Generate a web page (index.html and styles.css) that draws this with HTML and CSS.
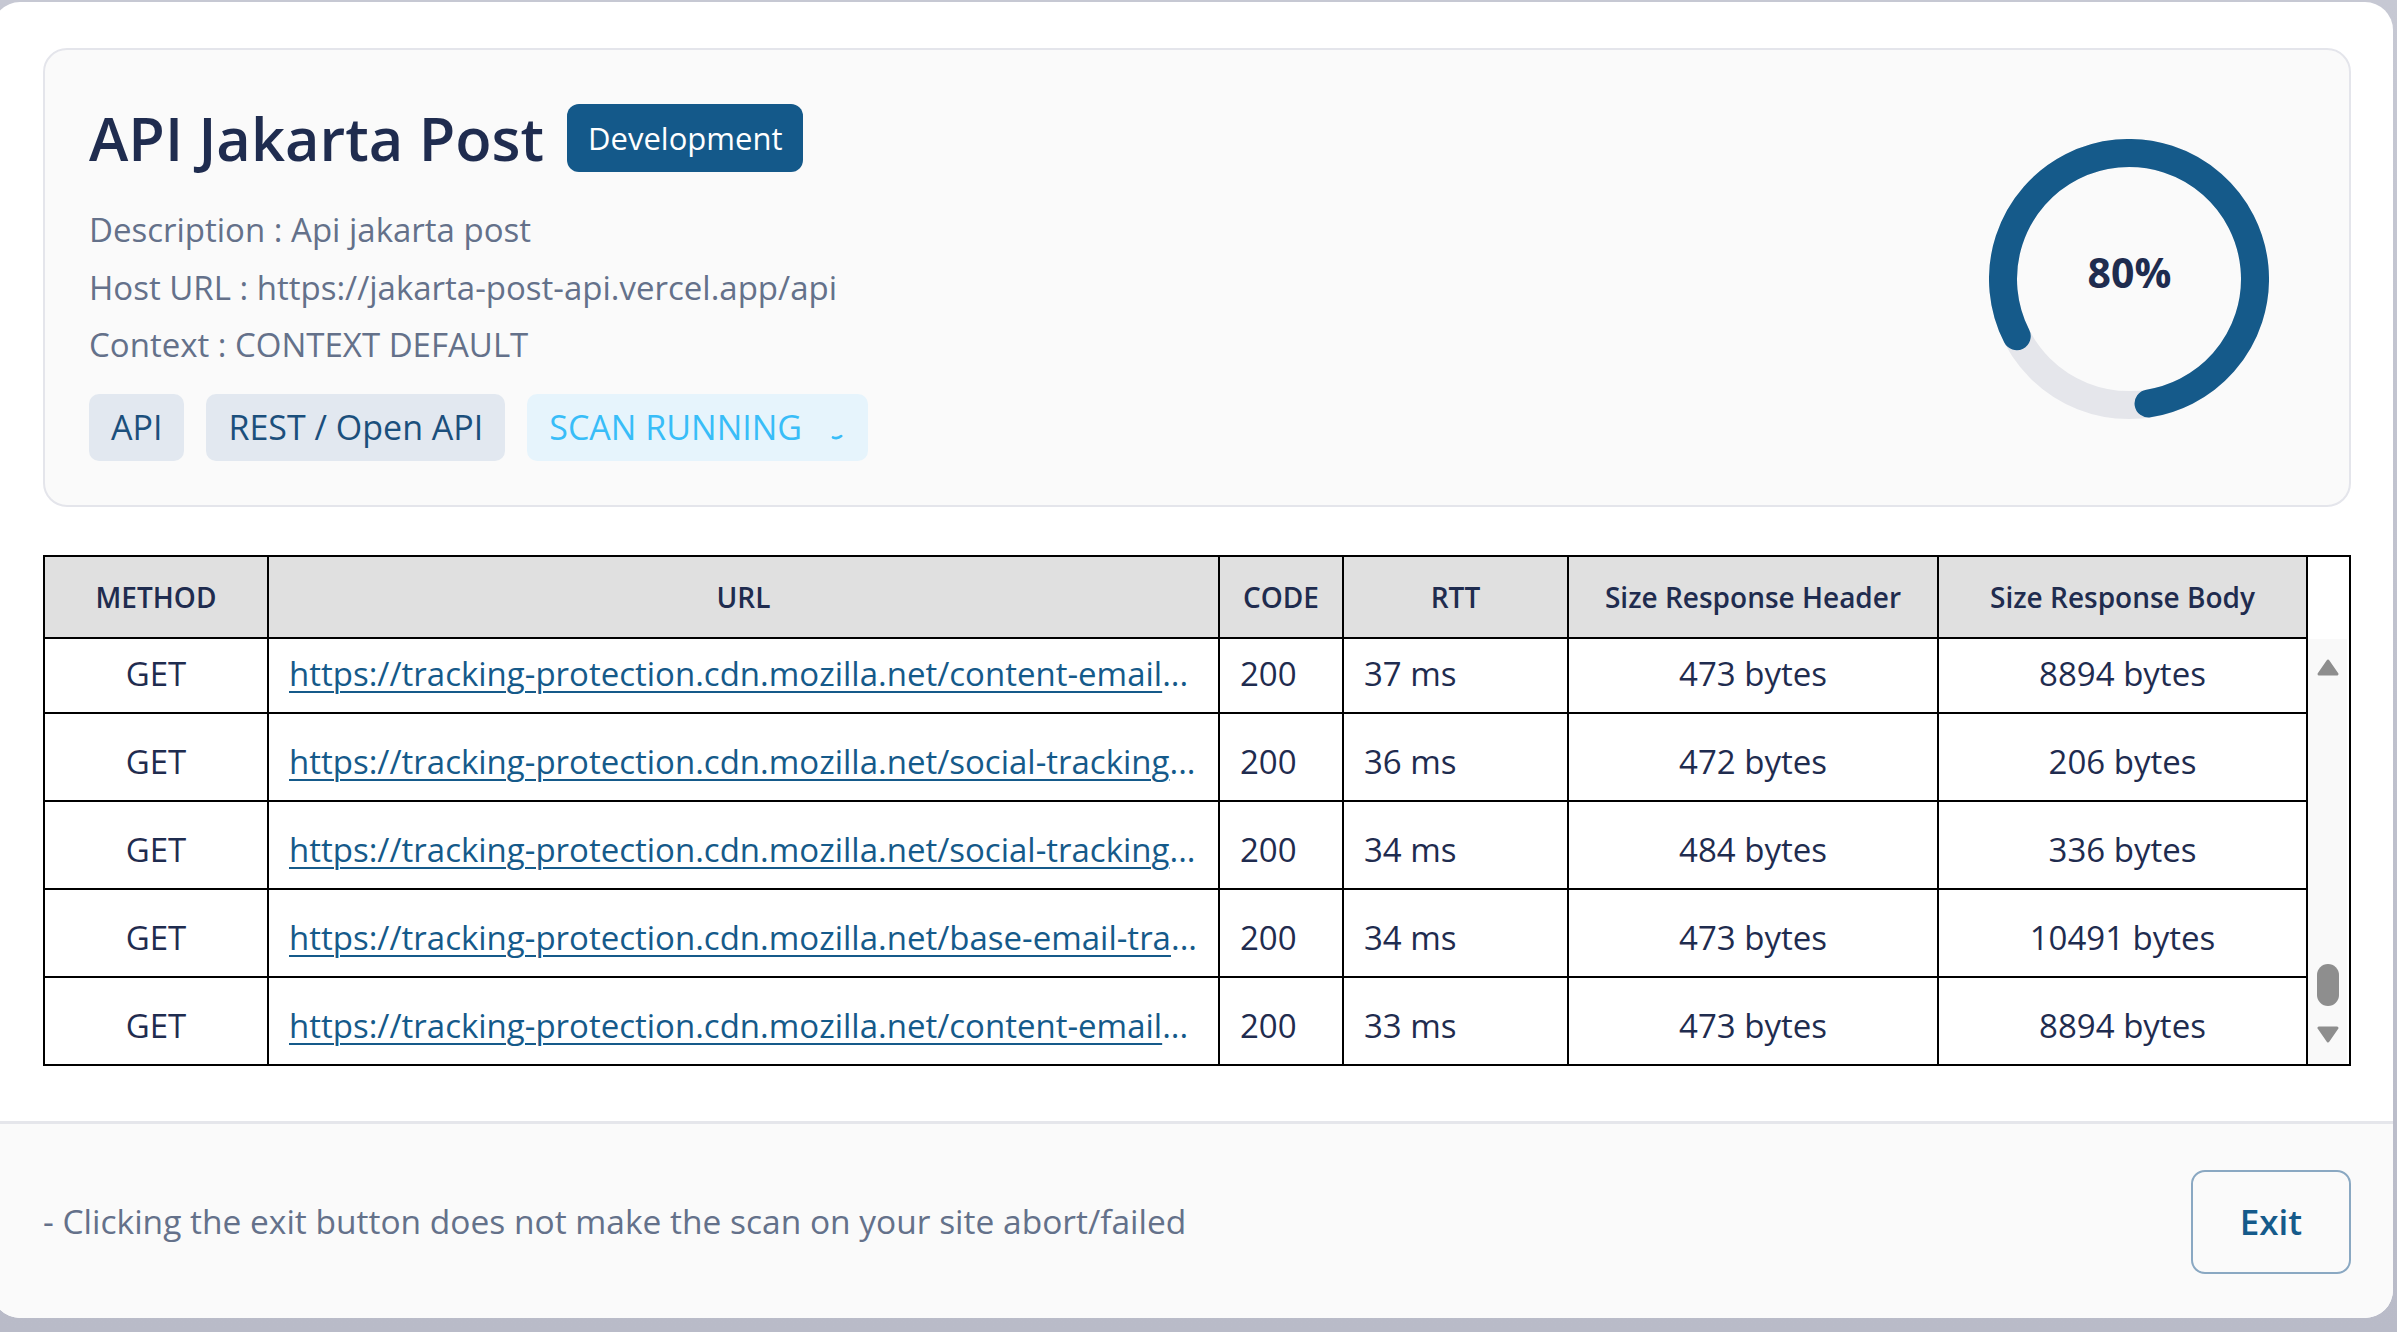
FILE: index.html
```html
<!DOCTYPE html>
<html lang="en">
<head>
<meta charset="utf-8">
<title>API Jakarta Post - Scan</title>
<link rel="stylesheet" href="styles.css">
</head>
<body>
<div class="modal">
  <div class="modal-main">
    <section class="card">
      <div class="info">
        <div class="title-row">
          <h1 class="title">API Jakarta Post</h1>
          <span class="env-badge">Development</span>
        </div>
        <div class="meta">
          <p>Description : Api jakarta post</p>
          <p>Host URL : https://jakarta-post-api.vercel.app/api</p>
          <p>Context : CONTEXT DEFAULT</p>
        </div>
        <div class="tags">
          <span class="tag">API</span>
          <span class="tag">REST / Open API</span>
          <span class="tag tag-running">SCAN RUNNING
            <svg class="spinner" width="20" height="20" viewBox="0 0 20 20"><path d="M15.25 16.04 A8 8 0 0 1 7 17.42" fill="none" stroke="#38bdf8" stroke-width="2.6" stroke-linecap="round"/></svg>
          </span>
        </div>
      </div>
      <div class="progress">
        <svg width="280" height="280" viewBox="0 0 280 280">
          <circle cx="140" cy="140" r="126" fill="none" stroke="#e5e6eb" stroke-width="28"/>
          <circle cx="140" cy="140" r="126" fill="none" stroke="#155a8a" stroke-width="28" stroke-linecap="round" stroke-dasharray="633.3 1000" transform="rotate(153 140 140)"/>
          <text x="140.5" y="149" text-anchor="middle" class="pct">80%</text>
        </svg>
      </div>
    </section>

    <div class="table-wrap">
      <div class="row head">
        <div class="cell">METHOD</div>
        <div class="cell">URL</div>
        <div class="cell">CODE</div>
        <div class="cell">RTT</div>
        <div class="cell">Size Response Header</div>
        <div class="cell">Size Response Body</div>
      </div>
      <div class="head-gap"></div>
      <div class="viewport">
        <div class="rows">
          <div class="row">
            <div class="cell c">GET</div>
            <div class="cell l"><a href="#">https://tracking-protection.cdn.mozilla.net/content-email</a><span class="dots">...</span></div>
            <div class="cell l">200</div>
            <div class="cell l">37 ms</div>
            <div class="cell c">473 bytes</div>
            <div class="cell c">8894 bytes</div>
          </div>
          <div class="row">
            <div class="cell c">GET</div>
            <div class="cell l"><a href="#">https://tracking-protection.cdn.mozilla.net/social-tracking</a><span class="dots">...</span></div>
            <div class="cell l">200</div>
            <div class="cell l">36 ms</div>
            <div class="cell c">472 bytes</div>
            <div class="cell c">206 bytes</div>
          </div>
          <div class="row">
            <div class="cell c">GET</div>
            <div class="cell l"><a href="#">https://tracking-protection.cdn.mozilla.net/social-tracking</a><span class="dots">...</span></div>
            <div class="cell l">200</div>
            <div class="cell l">34 ms</div>
            <div class="cell c">484 bytes</div>
            <div class="cell c">336 bytes</div>
          </div>
          <div class="row">
            <div class="cell c">GET</div>
            <div class="cell l"><a href="#">https://tracking-protection.cdn.mozilla.net/base-email-tra</a><span class="dots">...</span></div>
            <div class="cell l">200</div>
            <div class="cell l">34 ms</div>
            <div class="cell c">473 bytes</div>
            <div class="cell c">10491 bytes</div>
          </div>
          <div class="row">
            <div class="cell c">GET</div>
            <div class="cell l"><a href="#">https://tracking-protection.cdn.mozilla.net/content-email</a><span class="dots">...</span></div>
            <div class="cell l">200</div>
            <div class="cell l">33 ms</div>
            <div class="cell c">473 bytes</div>
            <div class="cell c">8894 bytes</div>
          </div>
        </div>
      </div>
      <div class="scrollbar">
        <svg class="arrow" width="22" height="17" viewBox="0 0 22 17"><path d="M11 2 L20 15 L2 15 Z" fill="#8e8e8e" stroke="#8e8e8e" stroke-width="3" stroke-linejoin="round"/></svg>
        <div class="track-space"></div>
        <div class="thumb"></div>
        <svg class="arrow down" width="22" height="17" viewBox="0 0 22 17"><path d="M2 2 L20 2 L11 15 Z" fill="#8e8e8e" stroke="#8e8e8e" stroke-width="3" stroke-linejoin="round"/></svg>
      </div>
    </div>
  </div>

  <footer class="modal-footer">
    <p class="note">- Clicking the exit button does not make the scan on your site abort/failed</p>
    <button class="exit-btn" type="button">Exit</button>
  </footer>
</div>
</body>
</html>
```

FILE: styles.css
```css
* { box-sizing: border-box; }

html, body {
  margin: 0;
  height: 1332px;
  overflow: hidden;
}

body {
  background: linear-gradient(#c6c8d3, #b9bbc8);
  font-family: "Open Sans", "Noto Sans", sans-serif;
  color: #1f2c4f;
}

.modal {
  margin: 2px 4px 0 -8px;
  height: 1316px;
  background: #ffffff;
  border-radius: 28px;
  display: flex;
  flex-direction: column;
  overflow: hidden;
}

.modal-main {
  flex: 1;
  padding: 46px 42px 0 51px;
}

/* ---------- summary card ---------- */
.card {
  border: 2px solid #e4e5eb;
  border-radius: 24px;
  background: #fafafa;
  padding: 51px 80px 44px 44px;
  display: flex;
  justify-content: space-between;
  align-items: center;
}

.title-row {
  display: flex;
  align-items: center;
  gap: 23px;
  height: 74px;
}

.title {
  margin: 0;
  font-size: 59.5px;
  line-height: 74px;
  font-weight: 600;
  color: #1f2c4f;
}

.env-badge {
  height: 68px;
  line-height: 68px;
  padding: 0 21px;
  border-radius: 12px;
  background: #14598a;
  color: #ffffff;
  font-size: 31px;
}

.meta {
  margin-top: 26px;
}

.meta p {
  margin: 0;
  font-size: 33px;
  line-height: 57.5px;
  color: #64718a;
}

.tags {
  margin-top: 20px;
  display: flex;
  gap: 22px;
}

.tag {
  display: flex;
  align-items: center;
  height: 67px;
  padding: 0 22px;
  border-radius: 10px;
  background: #e2e8f0;
  color: #1b4f7c;
  font-size: 34px;
}

.tag-running {
  background: #e6f4fc;
  color: #38bdf8;
}

.spinner {
  margin-left: 24px;
  margin-top: 6px;
}

.progress {
  width: 280px;
  height: 280px;
  margin-top: -3px;
}

.pct {
  font-family: "Open Sans", sans-serif;
  font-size: 41px;
  font-weight: 700;
  fill: #1f2c4f;
}

/* ---------- table ---------- */
.table-wrap {
  margin-top: 48px;
  border: 2px solid #000000;
  display: grid;
  grid-template-columns: 1fr 41px;
  grid-template-rows: 82px 425px;
  background: #ffffff;
}

.row {
  display: grid;
  grid-template-columns: 224px 951px 124px 225px 370px 1fr;
  height: 88px;
}

.row .cell {
  border-right: 2px solid #000000;
  border-bottom: 2px solid #000000;
  display: flex;
  align-items: center;
  padding: 10px 20px 0;
  font-size: 33px;
  color: #1f2c4f;
  white-space: nowrap;
  overflow: hidden;
}

.row.head {
  height: 82px;
}

.row.head .cell {
  background: #e0e0e0;
  justify-content: center;
  font-size: 28px;
  font-weight: 600;
  padding: 0 8px;
}

.cell.c { justify-content: center; }
.cell.l { justify-content: flex-start; }

.cell a {
  color: #155a8a;
  text-decoration: underline;
  text-underline-offset: 5px;
  text-decoration-thickness: 2px;
}

.dots {
  color: #155a8a;
}

.viewport {
  overflow: hidden;
}

.rows {
  margin-top: -13px;
}

.scrollbar {
  margin-right: 2px;
  background: #f9f9f9;
  display: flex;
  flex-direction: column;
  align-items: center;
  padding: 20px 0 21px;
}

.arrow { display: block; }

.track-space { flex: 1; }

.thumb {
  width: 22px;
  height: 42px;
  border-radius: 11px;
  background: #8e8e8e;
  margin-bottom: 20px;
}

/* ---------- footer ---------- */
.modal-footer {
  height: 197px;
  border-top: 3px solid #e5e6eb;
  background: #fafafa;
  padding: 0 42px 0 51px;
  display: flex;
  justify-content: space-between;
  align-items: center;
}

.note {
  margin: 0;
  font-size: 33.5px;
  color: #64718a;
}

.exit-btn {
  width: 160px;
  height: 104px;
  border: 2px solid #8aa8c2;
  border-radius: 14px;
  background: transparent;
  font-family: "Open Sans", sans-serif;
  font-size: 35px;
  font-weight: 600;
  color: #155a8a;
  margin-top: 1px;
}
```
